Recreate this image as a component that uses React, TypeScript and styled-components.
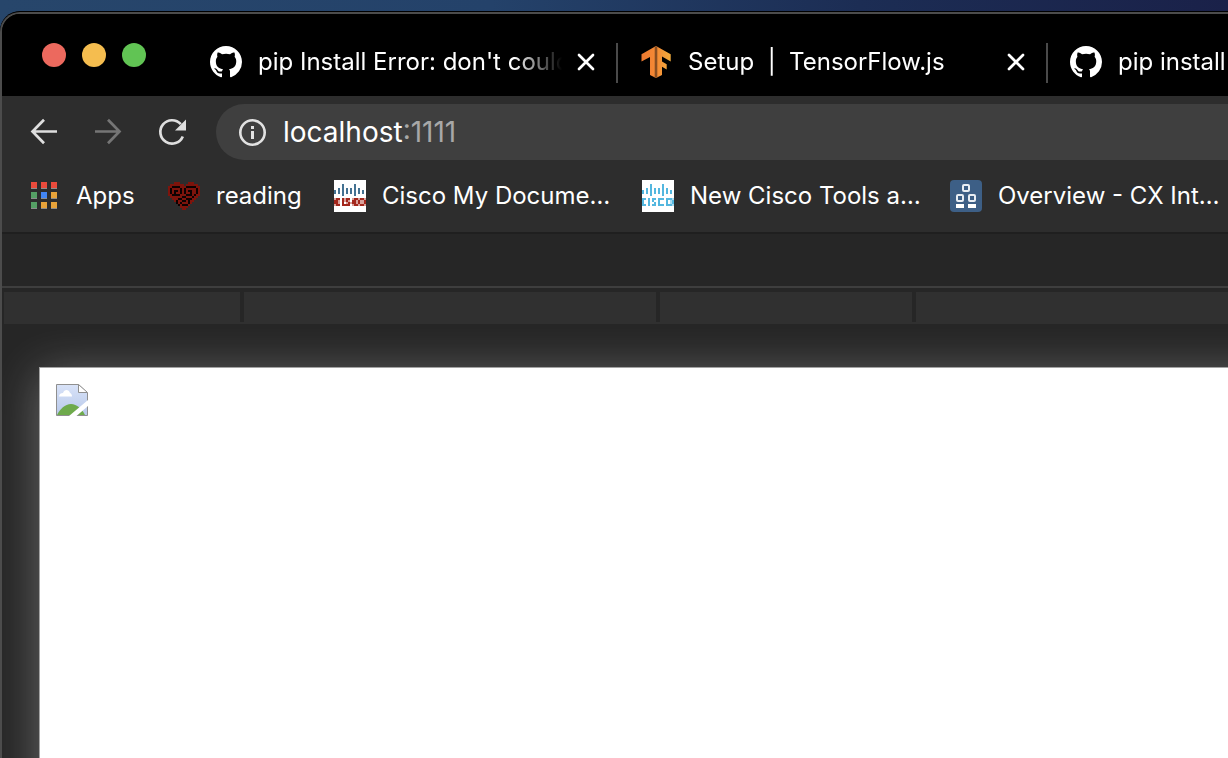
import React from "react";
import styled, { createGlobalStyle } from "styled-components";

const GlobalStyle = createGlobalStyle`
  * { box-sizing: border-box; }
  html, body { margin: 0; background: #262626; }
  body { overflow: hidden; }
  button { font: inherit; }
`;

const Desktop = styled.div`
  min-height: 100vh;
  padding-top: 11px;
  display: flex;
  flex-direction: column;
  overflow: hidden;
  font-family: Inter, "Liberation Sans", sans-serif;
  font-size: 24px;
  line-height: 32px;
  color: #fff;
  background: linear-gradient(90deg, #27466b 0%, #24426a 40%, #1c2d54 70%, #1a2149 100%);
`;

const BrowserWindow = styled.div`
  flex: 1;
  display: flex;
  flex-direction: column;
  border-top: 1px solid #000;
  border-top-left-radius: 20px;
  background: #000;
`;

const WindowFrame = styled.div`
  flex: 1;
  display: flex;
  flex-direction: column;
  border-top: 2px solid #4c4c4c;
  border-left: 2px solid #4c4c4c;
  border-top-left-radius: 20px;
  overflow: hidden;
`;

const TitleBar = styled.header`
  display: flex;
  height: 82px;
  padding: 0 0 0 40px;
  background: #000;
`;

const WindowControls = styled.div`
  display: flex;
  gap: 16px;
  width: 146px;
  flex: none;
  padding-top: 29px;
`;

const WindowButton = styled.button<{ $color: string }>`
  width: 24px;
  height: 24px;
  padding: 0;
  border: 0;
  border-radius: 50%;
  background: ${(p) => p.$color};
`;

const TabList = styled.nav`
  display: flex;
  flex: 1;
  min-width: 0;
  overflow: hidden;
  padding-top: 29px;
`;

const TabItem = styled.div`
  display: flex;
  align-items: center;
  flex: none;
  width: 430px;
  height: 40px;
  padding: 0 18px 2px 22px;
  border-right: 2px solid #4a4a4a;
`;

const TabTitle = styled.a`
  flex: 1;
  min-width: 0;
  margin: 0 12px 0 16px;
  overflow: hidden;
  white-space: pre;
  color: #fff;
  text-decoration: none;
  mask-image: linear-gradient(90deg, #000 calc(100% - 48px), transparent);
`;

const IconButton = styled.button<{ $size: number }>`
  display: flex;
  align-items: center;
  justify-content: center;
  flex: none;
  width: ${(p) => p.$size}px;
  height: ${(p) => p.$size}px;
  padding: 0;
  border: 0;
  background: none;
`;

const Toolbar = styled.div`
  display: flex;
  align-items: center;
  height: 72px;
  padding: 8px 0 8px 26px;
  gap: 32px;
  background: #2d2d2d;
`;

const AddressBar = styled.label`
  display: flex;
  align-items: center;
  flex: 1;
  height: 56px;
  margin-left: -4px;
  padding-left: 22px;
  border-radius: 28px 0 0 28px;
  background: #3f3f3f;
  font-size: 28px;
`;

const AddressInput = styled.input`
  field-sizing: content;
  margin-left: 17px;
  padding: 0;
  border: 0;
  outline: 0;
  background: none;
  color: #fff;
  font: inherit;
`;

const Port = styled.span`
  color: #a8a8a8;
`;

const BookmarkBar = styled.nav`
  display: flex;
  height: 66px;
  padding: 10px 0 0 28px;
  overflow: hidden;
  background: #2d2d2d;
  border-bottom: 2px solid #1f1f1f;
`;

const Bookmark = styled.a<{ $width: number }>`
  display: flex;
  align-items: center;
  flex: none;
  gap: 16px;
  width: ${(p) => p.$width}px;
  height: 36px;
  color: #fff;
  text-decoration: none;
  white-space: nowrap;
`;

const EmptyBar = styled.div`
  height: 54px;
  background: #262626;
  border-bottom: 2px solid #3e3e3e;
`;

const CellRow = styled.div`
  display: flex;
  height: 36px;
  margin-left: 2px;
  border-top: 4px solid #262626;
  background: #303030;
`;

const Cell = styled.div<{ $width?: number }>`
  flex: ${(p) => (p.$width ? "none" : "1")};
  width: ${(p) => (p.$width ? `${p.$width}px` : "auto")};
  height: 30px;
  border-right: ${(p) => (p.$width ? "4px solid #262626" : "0")};
`;

const Body = styled.div`
  flex: 1;
  display: flex;
  flex-direction: column;
  background: #262626;
`;

const Viewport = styled.main`
  flex: 1;
  display: flex;
  padding: 43px 0 0 37px;
  overflow: hidden;
`;

const Page = styled.div`
  flex: 1;
  padding: 16px;
  border-top: 1px solid #a3a3a3;
  border-left: 1px solid #a3a3a3;
  background: #fff;
  box-shadow: 0 6px 44px rgba(255, 255, 255, 0.3);
  margin-right: -60px;
  margin-bottom: -60px;
`;

const GitHubIcon = () => (
  <svg width="32" height="32" viewBox="0 0 16 16" fill="#fff" aria-hidden="true">
    <path d="M8 0C3.58 0 0 3.58 0 8c0 3.54 2.29 6.53 5.47 7.59.4.07.55-.17.55-.38 0-.19-.01-.82-.01-1.49-2.01.37-2.53-.49-2.69-.94-.09-.23-.48-.94-.82-1.13-.28-.15-.68-.52-.01-.53.63-.01 1.08.58 1.23.82.72 1.21 1.87.87 2.33.66.07-.52.28-.87.51-1.07-1.78-.2-3.64-.89-3.64-3.95 0-.87.31-1.59.82-2.15-.08-.2-.36-1.02.08-2.12 0 0 .67-.21 2.2.82.64-.18 1.32-.27 2-.27.68 0 1.36.09 2 .27 1.53-1.04 2.2-.82 2.2-.82.44 1.1.16 1.92.08 2.12.51.56.82 1.27.82 2.15 0 3.07-1.87 3.75-3.65 3.95.29.25.54.73.54 1.48 0 1.07-.01 1.93-.01 2.2 0 .21.15.46.55.38A8.013 8.013 0 0016 8c0-4.42-3.58-8-8-8z" />
  </svg>
);

const TensorFlowIcon = () => (
  <svg width="32" height="32" viewBox="0 0 32 32" aria-hidden="true">
    <defs>
      <linearGradient id="tf" x1="0" x2="1" y1="0" y2="0">
        <stop offset="0" stopColor="#ee7a30" />
        <stop offset="0.5" stopColor="#f58a35" />
        <stop offset="1" stopColor="#f2ac3c" />
      </linearGradient>
    </defs>
    <path
      fill="url(#tf)"
      d="M16 0 30.700 8.200V15.500L22 10.500V15.500L26.700 18.200V23.500L22 20.700V29L16 32 10 29V11L1.500 15.500V8.200Z"
    />
    <path fill="#8a4f22" d="M14.700 .7 16 0 17.300 .7V31.300L16 32 14.700 31.300Z" />
  </svg>
);

const CloseIcon = () => (
  <svg width="24" height="24" viewBox="0 0 24 24" stroke="#fff" strokeWidth="2.700" strokeLinecap="round" aria-hidden="true">
    <path d="M5 5 19 19M19 5 5 19" />
  </svg>
);

const ArrowIcon = ({ forward = false }: { forward?: boolean }) => (
  <svg width="32" height="32" viewBox="0 0 32 32" fill="none" stroke={forward ? "#757575" : "#dedede"} strokeWidth="2.700" aria-hidden="true">
    <path d={forward ? "M3 15.500H27.500M16 3.700 27.500 15.500 16 27.300" : "M29 15.500H4.500M16 3.700 4.500 15.500 16 27.300"} />
  </svg>
);

const ReloadIcon = () => (
  <svg width="32" height="32" viewBox="0 0 32 32" aria-hidden="true">
    <path fill="none" stroke="#dedede" strokeWidth="2.700" d="M26.800 20.500A11.700 11.700 0 1 1 24.800 8.200" />
    <path fill="#dedede" d="M30 3.500V14.500H19Z" />
  </svg>
);

const InfoIcon = () => (
  <svg width="28" height="28" viewBox="0 0 28 28" aria-hidden="true">
    <circle cx="14.500" cy="14.500" r="12.200" fill="none" stroke="#e2e2e2" strokeWidth="2.600" />
    <path fill="#e2e2e2" d="M13 8h3v3h-3zM13 13h3v8h-3z" />
  </svg>
);

const appColors = ["#e94b3c", "#e94b3c", "#e94b3c", "#55a065", "#4285f4", "#e8a33a", "#55a065", "#e8a33a", "#e8a33a"];

const AppsIcon = () => (
  <svg width="30" height="32" viewBox="0 0 30 32" shapeRendering="crispEdges" aria-hidden="true">
    {appColors.map((color, i) => {
      const x = 1 + (i % 3) * 10;
      const y = 2 + Math.floor(i / 3) * 10;
      return (
        <g key={i}>
          <rect x={x} y={y} width="6" height="7" fill="#8d8d8d" />
          <rect x={x} y={y} width="6" height="6" fill={color} />
        </g>
      );
    })}
  </svg>
);

type Palette = Record<string, string>;

// Draws a 16×16 favicon from rows of palette keys; a dot is left empty.
const PixelIcon = ({ rows, palette }: { rows: string[]; palette: Palette }) => (
  <svg width="32" height="32" viewBox="0 0 16 16" shapeRendering="crispEdges" aria-hidden="true">
    {rows.flatMap((row, y) =>
      row.split("").map((key, x) =>
        palette[key] ? <rect key={`${x}-${y}`} x={x} y={y} width="1" height="1" fill={palette[key]} /> : null
      )
    )}
  </svg>
);

const heartRows = [
  "................",
  "...RRR....RRR...",
  ".RRRRRRR.RRRRRR.",
  "RRKKKKRRRKKKKKRR",
  "RKRRRRKRKRRRRRKR",
  "RKRKKRKRKRKKRRKR",
  "RKRKRRKRKRRKRRKR",
  "RRKKKKRRRKKKRKRR",
  ".RRRRRRKKRRRKRR.",
  "..RRRKKRRKKKRR..",
  "...RKRRKKRKRR...",
  "....KRKRRRKR....",
  ".....KRKKKR.....",
  "......RRRR......",
  ".......RR.......",
  "................",
];

const ciscoBars = [
  "wwwwwwwwwwwwwwww",
  "wwwwwwwwwwwwwwww",
  "wwwwbwwwwwbwwwww",
  "wwwwbwwwwwbwwwww",
  "wwbwbwbwbwbwbwww",
  "bwbwbwbwbwbwbwbw",
  "bwbwbwbwbwbwbwbw",
  "wwwwbwwwwwbwwwww",
  "wwwwwwwwwwwwwwww",
];

const boldCiscoRows = [
  ...ciscoBars,
  "prrwrprrwprrprrp",
  "rrpwrprpwrrprppr",
  "rrpwrwprprrprppr",
  "prrwrrrrwprrprrp",
  "wwwwwwwwwwwwwwww",
  "wwwwwwwwwwwwwwww",
  "wwwwwwwwwwwwwwww",
];

const thinCiscoRows = [
  ...ciscoBars,
  "rrwrwrrwrrrwrrrp",
  "rwwrwrwwrwwwrwpr",
  "rwwrwwrwrwwwrwpr",
  "rrwrwrrwrrrwrrrp",
  "wwwwwwwwwwwwwwww",
  "wwwwwwwwwwwwwwww",
  "wwwwwwwwwwwwwwww",
];

const ciscoDark: Palette = { w: "#fff", b: "#447292", r: "#a3271c", p: "#d9a19b" };
const ciscoLight: Palette = { w: "#fff", b: "#54b7df", r: "#54b7df", p: "#a9dbef" };

const OverviewIcon = () => (
  <svg width="32" height="32" viewBox="0 0 32 32" aria-hidden="true">
    <rect width="32" height="32" rx="4" fill="#3d5f86" />
    <g fill="none" stroke="#e8edf3" strokeWidth="2">
      <rect x="13" y="5" width="6" height="6" rx="1" />
      <rect x="7" y="15" width="6" height="6" rx="1" />
      <rect x="19" y="15" width="6" height="6" rx="1" />
    </g>
    <path fill="#fff" d="M6 24h8v4H6zM18 24h8v4h-8z" />
  </svg>
);

const BrokenImageIcon = () => (
  <svg width="32" height="32" viewBox="0 0 32 32" role="img" aria-label="Broken image">
    <defs>
      <linearGradient id="sky" x1="0" x2="0" y1="0" y2="1">
        <stop offset="0" stopColor="#d9e3f8" />
        <stop offset="1" stopColor="#b7c8ea" />
      </linearGradient>
    </defs>
    <path d="M.5.5H22.500L31.500 9V31.500H.5Z" fill="url(#sky)" stroke="#8f8f8f" />
    <path d="M22.500.5V8.500H31.500Z" fill="#fff" stroke="#8f8f8f" />
    <path d="M3 12.500C3 10 5 9 7 9 8 5 13 5 14 9 15.500 9.500 16 11 16 12.500Z" fill="#fff" />
    <path d="M1 31C4 25 9 20 15 20S26 25 29 31Z" fill="#6eaa4c" />
    <path d="M13 32 32 16V22L20.500 32Z" fill="#fff" />
  </svg>
);

const tabs = [
  { title: "pip Install Error: don't could", icon: <GitHubIcon /> },
  { title: "Setup  |  TensorFlow.js", icon: <TensorFlowIcon /> },
  { title: "pip install", icon: <GitHubIcon /> },
];

const bookmarks = [
  { label: "Apps", width: 138, icon: <AppsIcon /> },
  { label: "reading", width: 166, icon: <PixelIcon rows={heartRows} palette={{ R: "#7d140c", K: "#0c0202" }} /> },
  { label: "Cisco My Docume…", width: 308, icon: <PixelIcon rows={boldCiscoRows} palette={ciscoDark} /> },
  { label: "New Cisco Tools a…", width: 308, icon: <PixelIcon rows={thinCiscoRows} palette={ciscoLight} /> },
  { label: "Overview - CX Int…", width: 308, icon: <OverviewIcon /> },
];

export default function App() {
  return (
    <Desktop>
      <GlobalStyle />
      <BrowserWindow>
        <WindowFrame>
          <TitleBar>
            <WindowControls>
              <WindowButton $color="#ec695e" aria-label="Close window" />
              <WindowButton $color="#f5bd4f" aria-label="Minimize window" />
              <WindowButton $color="#61c454" aria-label="Zoom window" />
            </WindowControls>
            <TabList aria-label="Tabs">
              {tabs.map((tab) => (
                <TabItem key={tab.title}>
                  {tab.icon}
                  <TabTitle href="#">{tab.title}</TabTitle>
                  <IconButton $size={24} aria-label="Close tab">
                    <CloseIcon />
                  </IconButton>
                </TabItem>
              ))}
            </TabList>
          </TitleBar>
          <Toolbar>
            <IconButton $size={32} aria-label="Back">
              <ArrowIcon />
            </IconButton>
            <IconButton $size={32} aria-label="Forward">
              <ArrowIcon forward />
            </IconButton>
            <IconButton $size={32} aria-label="Reload">
              <ReloadIcon />
            </IconButton>
            <AddressBar>
              <InfoIcon />
              <AddressInput aria-label="Address" defaultValue="localhost" />
              <Port>:1111</Port>
            </AddressBar>
          </Toolbar>
          <BookmarkBar aria-label="Bookmarks">
            {bookmarks.map((b) => (
              <Bookmark key={b.label} href="#" $width={b.width}>
                {b.icon}
                {b.label}
              </Bookmark>
            ))}
          </BookmarkBar>
          <Body>
            <EmptyBar />
            <CellRow>
              <Cell $width={240} />
              <Cell $width={416} />
              <Cell $width={256} />
              <Cell />
            </CellRow>
            <Viewport>
              <Page>
                <BrokenImageIcon />
              </Page>
            </Viewport>
          </Body>
        </WindowFrame>
      </BrowserWindow>
    </Desktop>
  );
}
